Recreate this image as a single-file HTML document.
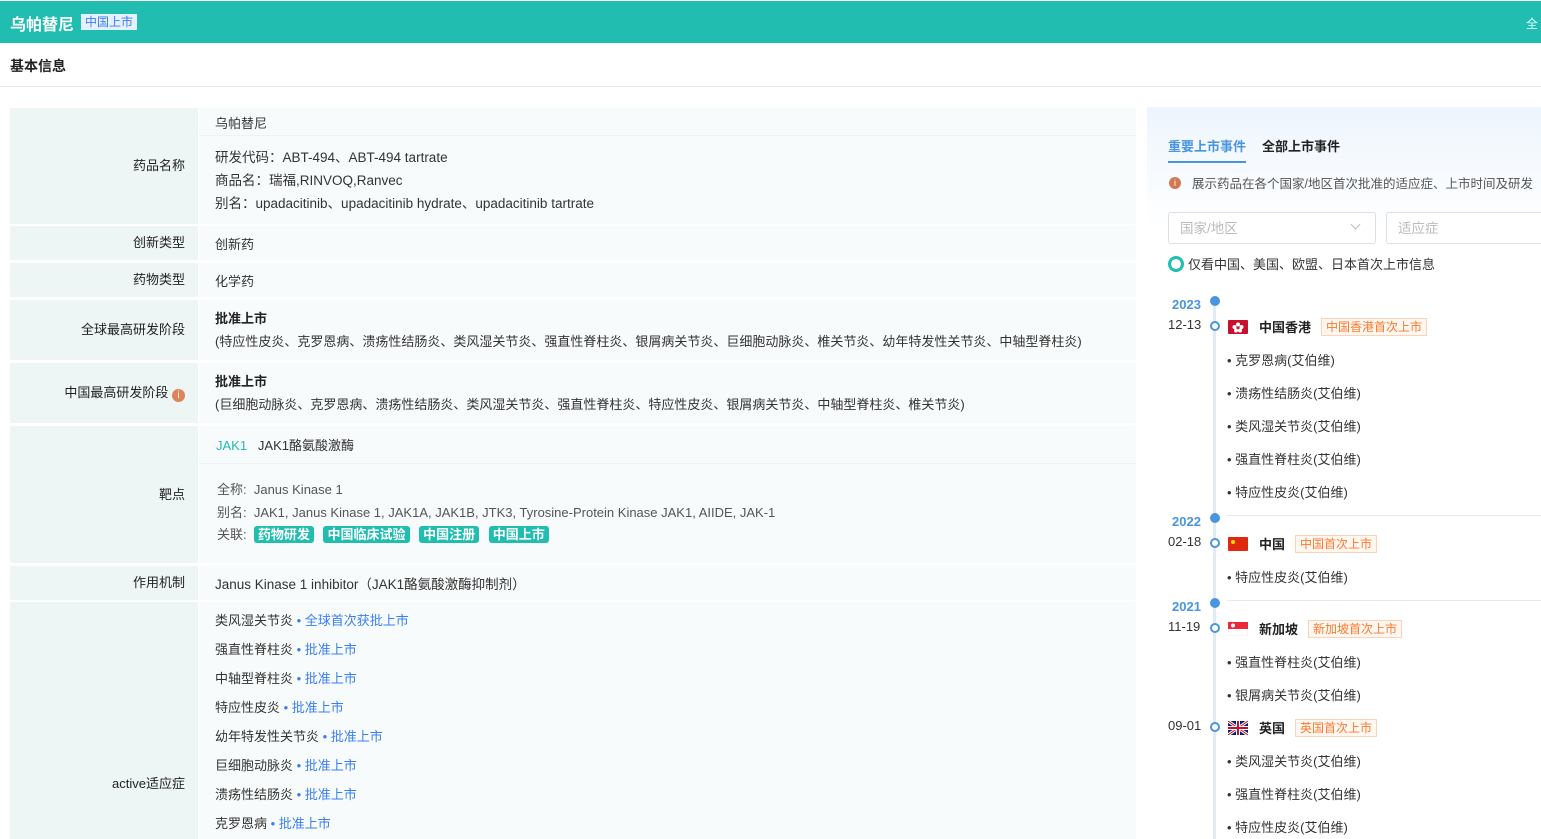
<!DOCTYPE html>
<html><head><meta charset="utf-8">
<style>
*{margin:0;padding:0;box-sizing:border-box}
html{width:1541px;height:839px;overflow:hidden}
body{width:1541px;height:839px;overflow:hidden;background:#fff;font-family:"Liberation Sans","Noto Sans CJK SC",sans-serif;font-size:13px;color:#333;position:relative}
.a{position:absolute;white-space:nowrap}
.hdr{left:0;width:1541px;height:42px;background:#20bdb0;top:1px}
.lab{position:absolute;left:10px;width:188px;background:#eef5f5;text-align:right;padding-right:13px;color:#222}
.val{position:absolute;left:199px;width:937px;background:#f8fbfb}
.tag{background:#20bdb0;color:#fff;font-weight:bold;padding:1px 4px;border-radius:3px;margin-right:6px;font-size:13px}
.blue{color:#3a7ff0}
.ot{border:1px solid #fbd3b8;background:#fff7f0;color:#fa7a2e;padding:0 4px;font-size:12px;line-height:16px}
.dot{position:absolute;left:1210px;width:10px;height:10px;border-radius:50%;background:#4a95df}
.ring{position:absolute;left:1210px;width:10px;height:10px;border-radius:50%;border:2.5px solid #4a95df;background:#fff}
.yr{position:absolute;left:1172px;color:#4a95df;font-weight:bold;font-size:13px}
.dt{position:absolute;left:1168px;color:#333}
.li{position:absolute;left:1227px;color:#333}
.sep{position:absolute;left:1227px;width:314px;height:1px;background:#e8e8e8}
.flag{position:absolute;left:1228px;width:20px;height:14px}
.cn{position:absolute;left:1259px;font-weight:bold;color:#222}
</style></head><body>
<div class="a hdr"></div>
<div class="a" style="left:10px;top:11px;color:#fff;font-weight:bold;font-size:16px">乌帕替尼</div>
<div class="a" style="left:81px;top:14px;background:#e6f1ff;color:#3a7ff0;font-size:12px;padding:0 4px;line-height:16px">中国上市</div>
<div class="a" style="left:1526px;top:15px;color:#dff;font-size:12px">全</div>
<div class="a" style="left:10px;top:56px;font-weight:bold;color:#222;font-size:14px">基本信息</div>
<div class="a" style="left:0;top:86px;width:1541px;height:1px;background:#e8e8e8"></div>

<div class="lab" style="top:108px;height:116px;line-height:116px">药品名称</div>
<div class="val" style="top:108px;height:116px"></div>
<div class="a" style="left:215px;top:113px">乌帕替尼</div>
<div class="a" style="left:199px;top:135px;width:937px;height:1px;background:#eef2f2"></div>
<div class="a" style="left:215px;top:146px;font-size:13.5px">研发代码：ABT-494、ABT-494 tartrate</div>
<div class="a" style="left:215px;top:169px;font-size:13.5px">商品名：瑞福,RINVOQ,Ranvec</div>
<div class="a" style="left:215px;top:192px;font-size:13.5px">别名：upadacitinib、upadacitinib hydrate、upadacitinib tartrate</div>

<div class="lab" style="top:226px;height:34px;line-height:34px">创新类型</div>
<div class="val" style="top:226px;height:34px"></div>
<div class="a" style="left:215px;top:234px">创新药</div>

<div class="lab" style="top:263px;height:34px;line-height:34px">药物类型</div>
<div class="val" style="top:263px;height:34px"></div>
<div class="a" style="left:215px;top:271px">化学药</div>

<div class="lab" style="top:300px;height:60px;line-height:60px">全球最高研发阶段</div>
<div class="val" style="top:300px;height:60px"></div>
<div class="a" style="left:215px;top:308px;font-weight:bold;color:#222">批准上市</div>
<div class="a" style="left:215px;top:331px">(特应性皮炎、克罗恩病、溃疡性结肠炎、类风湿关节炎、强直性脊柱炎、银屑病关节炎、巨细胞动脉炎、椎关节炎、幼年特发性关节炎、中轴型脊柱炎)</div>

<div class="lab" style="top:363px;height:60px;line-height:60px;padding-right:13px">中国最高研发阶段 <span style="display:inline-block;width:13px;height:13px;border-radius:50%;background:#e0835a;color:#fff;font-size:10px;line-height:13px;text-align:center;vertical-align:-1px">i</span></div>
<div class="val" style="top:363px;height:60px"></div>
<div class="a" style="left:215px;top:371px;font-weight:bold;color:#222">批准上市</div>
<div class="a" style="left:215px;top:394px">(巨细胞动脉炎、克罗恩病、溃疡性结肠炎、类风湿关节炎、强直性脊柱炎、特应性皮炎、银屑病关节炎、中轴型脊柱炎、椎关节炎)</div>

<div class="lab" style="top:426px;height:137px;line-height:137px">靶点</div>
<div class="val" style="top:426px;height:137px"></div>
<div class="a" style="left:199px;top:463px;width:937px;height:1px;background:#eef2f2"></div>
<div class="a" style="left:216px;top:435px"><span style="color:#20bdb0">JAK1</span>&nbsp;&nbsp; JAK1酪氨酸激酶</div>
<div class="a" style="left:217px;top:479px;color:#555">全称:&nbsp; Janus Kinase 1</div>
<div class="a" style="left:217px;top:502px;color:#555">别名:&nbsp; JAK1, Janus Kinase 1, JAK1A, JAK1B, JTK3, Tyrosine-Protein Kinase JAK1, AIIDE, JAK-1</div>
<div class="a" style="left:217px;top:524px;color:#555">关联:&nbsp; <span class="tag">药物研发</span> <span class="tag">中国临床试验</span> <span class="tag">中国注册</span> <span class="tag">中国上市</span></div>

<div class="lab" style="top:566px;height:34px;line-height:34px">作用机制</div>
<div class="val" style="top:566px;height:34px"></div>
<div class="a" style="left:215px;top:573px;font-size:13.5px">Janus Kinase 1 inhibitor（JAK1酪氨酸激酶抑制剂）</div>

<div class="lab" style="top:602px;height:260px;line-height:364px">active适应症</div>
<div class="val" style="top:602px;height:260px"></div>
<div class="a" style="left:215px;top:610px">类风湿关节炎<span class="blue"> • 全球首次获批上市</span></div>
<div class="a" style="left:215px;top:639px">强直性脊柱炎<span class="blue"> • 批准上市</span></div>
<div class="a" style="left:215px;top:668px">中轴型脊柱炎<span class="blue"> • 批准上市</span></div>
<div class="a" style="left:215px;top:697px">特应性皮炎<span class="blue"> • 批准上市</span></div>
<div class="a" style="left:215px;top:726px">幼年特发性关节炎<span class="blue"> • 批准上市</span></div>
<div class="a" style="left:215px;top:755px">巨细胞动脉炎<span class="blue"> • 批准上市</span></div>
<div class="a" style="left:215px;top:784px">溃疡性结肠炎<span class="blue"> • 批准上市</span></div>
<div class="a" style="left:215px;top:813px">克罗恩病<span class="blue"> • 批准上市</span></div>

<div class="a" style="left:1147px;top:107px;width:394px;height:732px;background:linear-gradient(#edf5fd 0,#fff 120px)"></div>
<div class="a" style="left:1168px;top:136px;color:#4a95df;font-weight:bold">重要上市事件</div>
<div class="a" style="left:1168px;top:161px;width:78px;height:2px;background:#4a95df"></div>
<div class="a" style="left:1262px;top:136px;color:#222;font-weight:bold">全部上市事件</div>
<div class="a" style="left:1169px;top:177px;width:12px;height:12px;border-radius:50%;background:#d07a55;color:#fff;font-size:9px;text-align:center;line-height:12px">i</div>
<div class="a" style="left:1192px;top:173px;color:#555;font-size:12.5px">展示药品在各个国家/地区首次批准的适应症、上市时间及研发</div>
<div class="a" style="left:1168px;top:212px;width:208px;height:32px;border:1px solid #dcdfe6;border-radius:3px;background:#fff"></div>
<div class="a" style="left:1180px;top:217px;color:#bbb;font-size:13.5px">国家/地区</div>
<div class="a" style="left:1352px;top:221px;width:7px;height:7px;border-right:1px solid #bbb;border-bottom:1px solid #bbb;transform:rotate(45deg)"></div>
<div class="a" style="left:1386px;top:212px;width:160px;height:32px;border:1px solid #dcdfe6;border-radius:3px;background:#fff"></div>
<div class="a" style="left:1398px;top:217px;color:#bbb;font-size:13.5px">适应症</div>
<div class="a" style="left:1168px;top:256px;width:16px;height:16px;border-radius:50%;border:3px solid #20bdb0"></div>
<div class="a" style="left:1188px;top:254px;color:#333">仅看中国、美国、欧盟、日本首次上市信息</div>

<div class="a" style="left:1213px;top:300px;width:3px;height:539px;background:#e1ebf6"></div>
<div class="dot" style="top:296px"></div>
<div class="yr" style="top:297px">2023</div>
<div class="ring" style="top:321px"></div>
<div class="dt" style="top:317px">12-13</div>
<svg class="flag" style="top:320px" viewBox="0 0 20 14"><rect width="20" height="14" fill="#c8102e" rx="1"/><g fill="#fff"><circle cx="10" cy="4.5" r="2"/><circle cx="13.5" cy="7" r="2"/><circle cx="12" cy="10.5" r="2"/><circle cx="8" cy="10.5" r="2"/><circle cx="6.5" cy="7" r="2"/></g></svg>
<div class="cn" style="top:317px">中国香港</div>
<div class="a ot" style="left:1321px;top:318px">中国香港首次上市</div>
<div class="li" style="top:350px">• 克罗恩病(艾伯维)</div>
<div class="li" style="top:383px">• 溃疡性结肠炎(艾伯维)</div>
<div class="li" style="top:416px">• 类风湿关节炎(艾伯维)</div>
<div class="li" style="top:449px">• 强直性脊柱炎(艾伯维)</div>
<div class="li" style="top:482px">• 特应性皮炎(艾伯维)</div>

<div class="sep" style="top:515px"></div>
<div class="dot" style="top:513px"></div>
<div class="yr" style="top:514px">2022</div>
<div class="ring" style="top:538px"></div>
<div class="dt" style="top:534px">02-18</div>
<svg class="flag" style="top:537px" viewBox="0 0 20 14"><rect width="20" height="14" fill="#de2910" rx="1"/><circle cx="5" cy="5" r="2" fill="#ffde00"/></svg>
<div class="cn" style="top:534px">中国</div>
<div class="a ot" style="left:1295px;top:535px">中国首次上市</div>
<div class="li" style="top:567px">• 特应性皮炎(艾伯维)</div>

<div class="sep" style="top:600px"></div>
<div class="dot" style="top:598px"></div>
<div class="yr" style="top:599px">2021</div>
<div class="ring" style="top:623px"></div>
<div class="dt" style="top:619px">11-19</div>
<svg class="flag" style="top:622px" viewBox="0 0 20 14"><rect width="20" height="14" fill="#fff" stroke="#ddd" stroke-width=".5"/><rect width="20" height="7" fill="#ed2939"/><circle cx="5" cy="3.5" r="2" fill="#fff"/></svg>
<div class="cn" style="top:619px">新加坡</div>
<div class="a ot" style="left:1308px;top:620px">新加坡首次上市</div>
<div class="li" style="top:652px">• 强直性脊柱炎(艾伯维)</div>
<div class="li" style="top:685px">• 银屑病关节炎(艾伯维)</div>
<div class="ring" style="top:722px"></div>
<div class="dt" style="top:718px">09-01</div>
<svg class="flag" style="top:721px" viewBox="0 0 20 14"><rect width="20" height="14" fill="#012169"/><path d="M0 0L20 14M20 0L0 14" stroke="#fff" stroke-width="3"/><path d="M0 0L20 14M20 0L0 14" stroke="#c8102e" stroke-width="1"/><path d="M10 0V14M0 7H20" stroke="#fff" stroke-width="4"/><path d="M10 0V14M0 7H20" stroke="#c8102e" stroke-width="2"/></svg>
<div class="cn" style="top:718px">英国</div>
<div class="a ot" style="left:1295px;top:719px">英国首次上市</div>
<div class="li" style="top:751px">• 类风湿关节炎(艾伯维)</div>
<div class="li" style="top:784px">• 强直性脊柱炎(艾伯维)</div>
<div class="li" style="top:817px">• 特应性皮炎(艾伯维)</div>
</body></html>
